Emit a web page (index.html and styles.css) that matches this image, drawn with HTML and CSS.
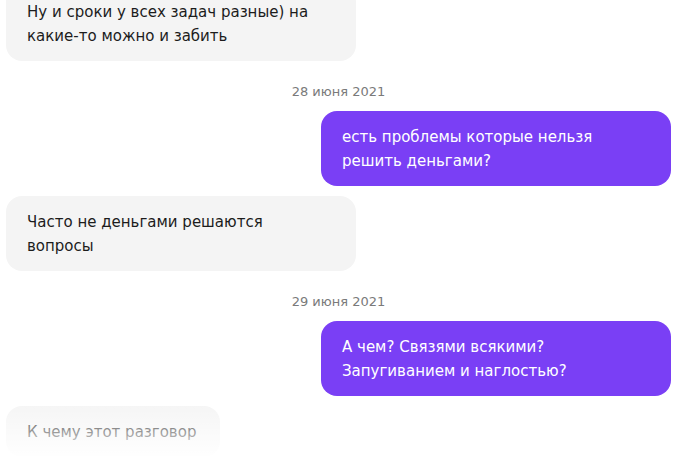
FILE: index.html
```html
<!DOCTYPE html>
<html lang="ru">
<head>
<meta charset="utf-8">
<link rel="stylesheet" href="styles.css">
</head>
<body>
<div class="chat">
  <div class="feed">
    <div class="msg in first">
      <div class="bubble">Ну и сроки у всех задач разные) на какие-то можно и забить</div>
    </div>
    <div class="date">28 июня 2021</div>
    <div class="msg out">
      <div class="bubble">есть проблемы которые нельзя решить деньгами?</div>
    </div>
    <div class="msg in">
      <div class="bubble">Часто не деньгами решаются вопросы</div>
    </div>
    <div class="date">29 июня 2021</div>
    <div class="msg out">
      <div class="bubble">А чем? Связями всякими? Запугиванием и наглостью?</div>
    </div>
    <div class="msg in">
      <div class="bubble short">К чему этот разговор</div>
    </div>
  </div>
  <div class="fade"></div>
</div>
</body>
</html>
```
FILE: styles.css
```css
html, body {
  margin: 0;
  padding: 0;
  background: #ffffff;
}
.chat {
  position: relative;
  width: 694px;
  height: 456px;
  overflow: hidden;
  font-family: "DejaVu Sans", Verdana, sans-serif;
}
.feed {
  display: flex;
  flex-direction: column;
  gap: 10px;
  padding: 0 23px 0 6px;
  margin-top: -14px;
}
.msg {
  display: flex;
}
.msg.in { justify-content: flex-start; }
.msg.out { justify-content: flex-end; }
.bubble {
  width: 350px;
  box-sizing: border-box;
  padding: 14px 24px 13px 21px;
  font-size: 15px;
  line-height: 24px;
  border-radius: 16px;
}
.msg.in .bubble {
  background: #f4f4f4;
  color: #1c1c1c;
}
.msg.out .bubble {
  background: #7a3ff5;
  color: #ffffff;
}
.bubble.short {
  width: auto;
}
.date {
  text-align: center;
  font-size: 13px;
  line-height: 18px;
  color: #7a7a7a;
  margin: 12px 0 0;
}
.fade {
  position: absolute;
  left: 0;
  right: 0;
  bottom: 0;
  height: 58px;
  background: linear-gradient(to bottom, rgba(255,255,255,0), rgba(255,255,255,0.95));
  pointer-events: none;
}
```
